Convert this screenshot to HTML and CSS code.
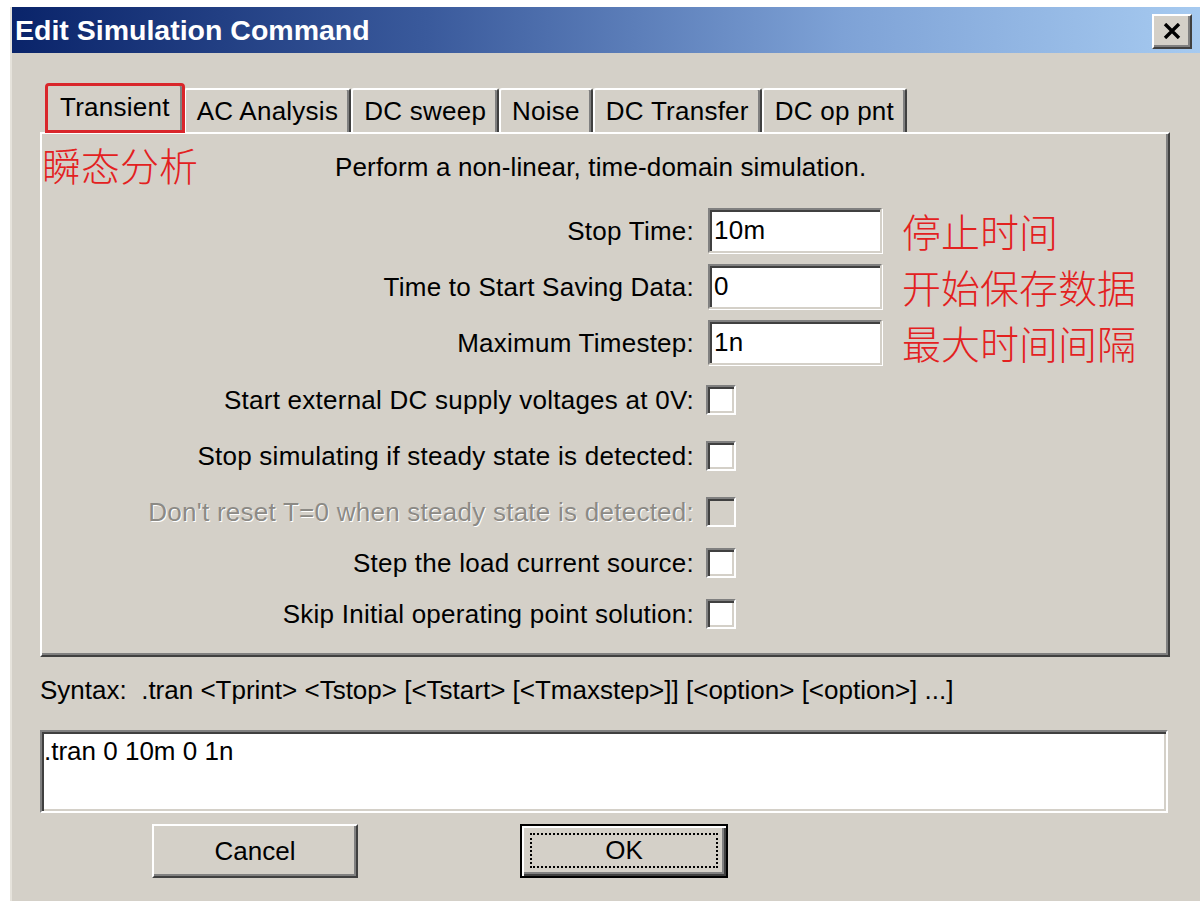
FILE: index.html
```html
<!DOCTYPE html>
<html lang="en">
<head>
<meta charset="utf-8">
<title>Edit Simulation Command</title>
<link rel="stylesheet" href="styles.css">
</head>
<body>
<div class="dialog">
  <div class="titlebar">
    <span class="title">Edit Simulation Command</span>
    <button class="close" type="button" aria-label="Close">
      <svg width="18" height="16" viewBox="0 0 18 16"><path d="M2 1 L16 15 M16 1 L2 15" stroke="#000" stroke-width="3.4" fill="none"/></svg>
    </button>
  </div>

  <div class="content">
    <div class="tabs">
      <div class="tab active">Transient</div>
      <div class="tab">AC Analysis</div>
      <div class="tab">DC sweep</div>
      <div class="tab">Noise</div>
      <div class="tab">DC Transfer</div>
      <div class="tab">DC op pnt</div>
    </div>

    <div class="panel">
      <div class="intro">
        <span class="note note-head">瞬态分析</span>
        <p class="desc">Perform a non-linear, time-domain simulation.</p>
      </div>

      <div class="fields">
        <label class="label">Stop Time:</label>
        <div class="edit">10m</div>
        <span class="note">停止时间</span>

        <label class="label">Time to Start Saving Data:</label>
        <div class="edit">0</div>
        <span class="note">开始保存数据</span>

        <label class="label">Maximum Timestep:</label>
        <div class="edit">1n</div>
        <span class="note">最大时间间隔</span>
      </div>

      <div class="checks">
        <div class="check-row">
          <span class="label">Start external DC supply voltages at 0V:</span>
          <span class="box"></span>
        </div>
        <div class="check-row">
          <span class="label">Stop simulating if steady state is detected:</span>
          <span class="box"></span>
        </div>
        <div class="check-row disabled">
          <span class="label">Don't reset T=0 when steady state is detected:</span>
          <span class="box"></span>
        </div>
        <div class="check-row tight">
          <span class="label">Step the load current source:</span>
          <span class="box"></span>
        </div>
        <div class="check-row tight">
          <span class="label">Skip Initial operating point solution:</span>
          <span class="box"></span>
        </div>
      </div>
    </div>

    <div class="syntax">Syntax:&nbsp; .tran &lt;Tprint&gt; &lt;Tstop&gt; [&lt;Tstart&gt; [&lt;Tmaxstep&gt;]] [&lt;option&gt; [&lt;option&gt;] ...]</div>

    <div class="command">.tran 0 10m 0 1n</div>

    <div class="buttons">
      <button class="btn" type="button">Cancel</button>
      <button class="btn default" type="button"><span class="focus">OK</span></button>
    </div>
  </div>
</div>
</body>
</html>
```

FILE: styles.css
```css
* {
  box-sizing: border-box;
}

html, body {
  margin: 0;
  padding: 0;
  background: #ffffff;
  overflow: hidden;
}

body {
  width: 1200px;
  height: 901px;
  font-family: "Liberation Sans", Arial, sans-serif;
  font-size: 26px;
  letter-spacing: 0.25px;
  color: #000;
}

/* window frame */
.dialog {
  margin: 7px 0 0 10px;
  width: 1190px;
  height: 894px;
  background: #d4d0c8;
  border-left: 2px solid #e6e3dc;
}

.titlebar {
  height: 46px;
  display: flex;
  align-items: center;
  justify-content: space-between;
  padding: 0 8px 0 3px;
  background: linear-gradient(to right, #0a246a 0%, #3a5a9c 35%, #7ea2d6 70%, #a6caf0 100%);
}

.title {
  color: #fff;
  font-weight: bold;
  font-size: 28.5px;
  line-height: 46px;
  letter-spacing: 0;
}

.close {
  width: 40px;
  height: 35px;
  margin-top: 2px;
  padding: 0;
  display: flex;
  align-items: center;
  justify-content: center;
  background: #d4d0c8;
  border: 2px solid;
  border-color: #fff #404040 #404040 #fff;
  box-shadow: inset -2px -2px 0 #808080;
}

.content {
  padding: 31px 0 0 28px;
}

/* tab strip */
.tabs {
  display: flex;
  align-items: flex-end;
  height: 48px;
  margin-left: 6px;
}

.tab {
  height: 44px;
  padding: 0 11px 0 11px;
  display: flex;
  align-items: center;
  border-top: 2px solid #fff;
  border-left: 2px solid #fff;
  border-right: 2px solid #404040;
  box-shadow: inset -2px 0 0 #808080;
  border-radius: 3px 3px 0 0;
  white-space: nowrap;
  line-height: 1;
}

.tab.active {
  height: 48px;
  padding: 0 12px 4px 12px;
  outline: 3px solid #d9262b;
  outline-offset: -2px;
  position: relative;
  z-index: 1;
}

/* page of the tab control */
.panel {
  width: 1130px;
  border-top: 2px solid #fff;
  border-left: 2px solid #fff;
  border-right: 2px solid #404040;
  border-bottom: 2px solid #404040;
  box-shadow: inset -2px -2px 0 #808080;
  padding-bottom: 26px;
}

.intro {
  height: 66px;
  display: flex;
  align-items: center;
}

.note {
  font-family: "Noto Sans CJK SC", "Noto Sans CJK TC", sans-serif;
  font-weight: 300;
  color: #e3211f;
  font-size: 39px;
  line-height: 1;
  letter-spacing: 0;
  white-space: nowrap;
}

.note-head {
  margin-top: -6px;
}

.desc {
  margin: 0 0 0 137px;
  line-height: 30px;
  letter-spacing: 0.15px;
}

.label {
  text-align: right;
  white-space: nowrap;
  line-height: 30px;
}

.fields {
  margin-top: 8px;
  display: grid;
  grid-template-columns: 652px 174px auto;
  grid-auto-rows: 45px;
  column-gap: 14px;
  row-gap: 11px;
  align-items: center;
}

.fields .note {
  margin-left: 6px;
}

.edit {
  height: 45px;
  background: #fff;
  border: 2px solid;
  border-color: #808080 #d4d0c8 #d4d0c8 #808080;
  box-shadow: inset 2px 2px 0 #404040, 1px 1px 0 #fff;
  padding: 0 4px 0 4px;
  line-height: 40px;
}

.checks {
  margin-top: 20px;
  display: flex;
  flex-direction: column;
  gap: 26px;
}

.check-row {
  height: 30px;
  display: grid;
  grid-template-columns: 652px 30px;
  column-gap: 12px;
  align-items: center;
}

.check-row.tight {
  margin-top: -5px;
}

.box {
  width: 30px;
  height: 30px;
  background: #fff;
  border: 2px solid;
  border-color: #808080 #fff #fff #808080;
  box-shadow: inset 2px 2px 0 #404040, inset -2px -2px 0 #d4d0c8;
}

.disabled .label {
  color: #8c8a85;
  text-shadow: 1px 1px 0 #fff;
}

.disabled .box {
  background: #d4d0c8;
}

.syntax {
  margin-top: 18px;
  line-height: 30px;
  white-space: nowrap;
  letter-spacing: 0;
}

.command {
  margin-top: 25px;
  width: 1128px;
  height: 83px;
  background: #fff;
  border: 2px solid;
  border-color: #808080 #fff #fff #808080;
  box-shadow: inset 2px 2px 0 #404040, inset -2px -2px 0 #d4d0c8;
  padding: 4px 0 0 2px;
  line-height: 30px;
  letter-spacing: 0;
}

.buttons {
  margin-top: 11px;
  display: flex;
  gap: 162px;
  padding-left: 112px;
}

.btn {
  width: 206px;
  height: 54px;
  font-family: "Liberation Sans", Arial, sans-serif;
  font-size: 26px;
  color: #000;
  background: #d4d0c8;
  border: 2px solid;
  border-color: #fff #404040 #404040 #fff;
  box-shadow: inset -2px -2px 0 #808080;
  padding: 0;
}

.btn.default {
  width: 208px;
  border: 2px solid #000;
  box-shadow: inset 2px 2px 0 #fff, inset -2px -2px 0 #404040, inset -4px -4px 0 #808080;
  padding: 7px 8px 8px 8px;
}

.focus {
  display: flex;
  align-items: center;
  justify-content: center;
  width: 100%;
  height: 100%;
  border: 2px dotted #000;
}
```
